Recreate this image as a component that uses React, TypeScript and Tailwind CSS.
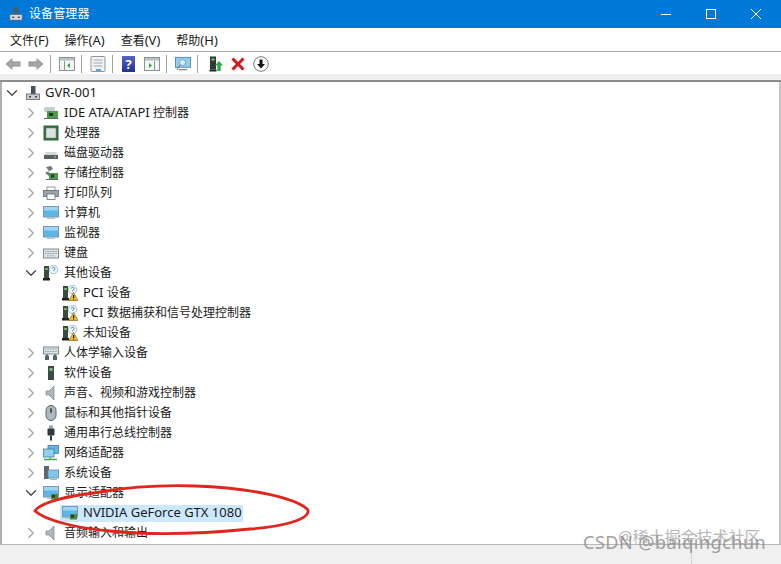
import { ChevronDown, ChevronRight } from "lucide-react";

const font = { fontFamily: '"Noto Sans", "Noto Sans CJK SC", sans-serif' };

// latin runs sit a bit wider than the cjk ones in the original
function Label({ text }: { text: string }) {
  const parts = text.split(/([\x20-\x7e]+)/).filter(Boolean);
  return (
    <>
      {parts.map((part, i) =>
        /^[\x20-\x7e]+$/.test(part) ? (
          <span key={i} className="text-[13px] whitespace-pre">
            {part}
          </span>
        ) : (
          <span key={i}>{part}</span>
        )
      )}
    </>
  );
}

function Box({ children }: { children: React.ReactNode }) {
  return (
    <svg viewBox="0 0 16 16" className="h-4 w-4 shrink-0">
      {children}
    </svg>
  );
}

const Warn = () => (
  <>
    <path d="M11.500 7.500L16 15.500H7z" fill="#f3bd2e" stroke="#8a6a10" strokeWidth="0.700" />
    <rect x="11" y="10" width="1.200" height="3" fill="#222" />
    <rect x="11" y="13.600" width="1.200" height="1.100" fill="#222" />
  </>
);

const Tower = () => (
  <>
    <rect x="1" y="1" width="5" height="12" fill="#3d4a3c" />
    <rect x="2" y="3" width="3" height="2" fill="#6fae6a" />
    <rect x="0" y="13" width="7" height="2.500" fill="#222" />
  </>
);

const Unknown = () => (
  <>
    <circle cx="10.500" cy="4.500" r="4.200" fill="#eef5fb" stroke="#8fb4d2" strokeWidth="0.800" />
    <path d="M9.200 3.600a1.400 1.400 0 1 1 1.900 1.400l-.5.4v.7" fill="none" stroke="#2f78b5" strokeWidth="0.900" />
  </>
);

const Monitor = ({ card }: { card?: boolean }) => (
  <>
    <rect x="0.500" y="1.500" width="15" height="10.500" fill="#5db6e8" stroke="#7c98ab" />
    <rect x="1" y="2" width="14" height="3.500" fill="#9bd6f5" />
    <rect x="4" y="12.500" width="8" height="1.500" fill="#b5c2cb" />
    {card && (
      <>
        <rect x="8" y="9" width="7" height="5.500" fill="#4c8a3f" />
        <rect x="9" y="10" width="3" height="2.500" fill="#1f3d1b" />
      </>
    )}
  </>
);

const icons: Record<string, React.ReactNode> = {
  root: (
    <>
      <rect x="6" y="1" width="4.500" height="8" fill="#46535d" />
      <rect x="1.500" y="9" width="13" height="5.500" fill="#c9ced2" stroke="#59646c" strokeWidth="0.800" />
      <rect x="4" y="11" width="2" height="1.500" fill="#444" />
      <rect x="10" y="11" width="2" height="1.500" fill="#444" />
    </>
  ),
  ide: (
    <>
      <rect x="1" y="2" width="11" height="5" rx="1" fill="#c7cfd3" />
      <rect x="4" y="6" width="11" height="7" fill="#4d9a4c" />
      <rect x="6" y="8" width="4" height="3" fill="#1e3c1d" />
      <rect x="1" y="13" width="14" height="1" fill="#5f6a70" />
    </>
  ),
  cpu: (
    <>
      <rect x="0.500" y="0.500" width="15" height="15" fill="#2f6b3c" />
      <rect x="3" y="3" width="10" height="10" fill="#dfe3df" stroke="#7b8f80" strokeWidth="0.600" />
    </>
  ),
  disk: (
    <>
      <path d="M3 7h10l2 3v4H1v-4z" fill="#d4d8da" />
      <rect x="1" y="10" width="14" height="4" fill="#5a5f63" />
      <rect x="11" y="11.500" width="2" height="1" fill="#9adf7a" />
    </>
  ),
  storage: (
    <>
      <path d="M3 2l5-1 2 3-5 3 4 2-3 2-4-3 4-2z" fill="#6d7a82" />
      <rect x="6" y="8" width="9" height="6" fill="#4d9a4c" />
      <rect x="8" y="9.500" width="3" height="3" fill="#1e3c1d" />
      <rect x="3" y="14" width="12" height="1" fill="#5f6a70" />
    </>
  ),
  printer: (
    <>
      <rect x="4" y="2" width="8" height="4" fill="#fff" stroke="#7a8790" strokeWidth="0.800" />
      <rect x="0.500" y="5.500" width="15" height="6" fill="#9aa5ac" stroke="#5e6a72" strokeWidth="0.800" />
      <rect x="4" y="9" width="8" height="5.500" fill="#fff" stroke="#5e6a72" strokeWidth="0.800" />
    </>
  ),
  monitor: <Monitor />,
  keyboard: (
    <>
      <rect x="0.500" y="4" width="15" height="9" fill="#dfe4e7" stroke="#7e8a92" />
      <path d="M2 6.500h12M2 8.500h12M4 10.800h8" stroke="#8e9aa2" strokeWidth="1" strokeDasharray="1 0.600" />
    </>
  ),
  other: (
    <>
      <Tower />
      <Unknown />
    </>
  ),
  warn: (
    <>
      <Tower />
      <Unknown />
      <Warn />
    </>
  ),
  hid: (
    <>
      <rect x="0.500" y="2" width="15" height="7" fill="#dfe4e7" stroke="#7e8a92" />
      <path d="M2 4h12M2 6.500h12" stroke="#8e9aa2" strokeDasharray="1 0.600" />
      <path d="M2 15v-4l2-2 2 2v4zM10 15v-4l2-2 2 2v4z" fill="#56646d" />
    </>
  ),
  software: (
    <>
      <rect x="5" y="1" width="6" height="14" fill="#3e4a46" />
      <rect x="6.500" y="3" width="3" height="3" fill="#6cc46c" />
    </>
  ),
  sound: <path d="M3 6h3l5-5v14l-5-5H3z" fill="#aeb7bc" stroke="#7c878e" strokeWidth="0.700" />,
  mouse: (
    <>
      <rect x="3" y="0.500" width="10" height="15" rx="5" fill="#aeb8be" stroke="#58646c" />
      <rect x="7" y="3" width="2" height="5" rx="1" fill="#48545c" />
    </>
  ),
  usb: (
    <>
      <rect x="6" y="0.500" width="4" height="3" fill="#9aa3a8" />
      <rect x="4.500" y="3.500" width="7" height="7" rx="1" fill="#30383d" />
      <rect x="7" y="10.500" width="2" height="5" fill="#30383d" />
    </>
  ),
  network: (
    <>
      <rect x="5" y="0.500" width="10.500" height="8" fill="#5db6e8" stroke="#4a7a9c" strokeWidth="0.800" />
      <rect x="0.500" y="4" width="10.500" height="8" fill="#8fd0f2" stroke="#4a7a9c" strokeWidth="0.800" />
      <path d="M1 14.500h13M7 12v2.500" stroke="#45a845" strokeWidth="1.300" />
    </>
  ),
  system: (
    <>
      <rect x="1" y="1" width="5" height="13" fill="#59666e" />
      <rect x="5" y="5" width="10.500" height="8" fill="#7cc6ee" stroke="#6c8798" strokeWidth="0.800" />
      <rect x="7" y="13.500" width="7" height="1.500" fill="#aab6bd" />
    </>
  ),
  display: <Monitor card />,
};

type Row = { name: string; icon: string; state: "closed" | "open" | "leaf"; selected?: boolean };

const rows: Row[] = [
  { name: "IDE ATA/ATAPI 控制器", icon: "ide", state: "closed" },
  { name: "处理器", icon: "cpu", state: "closed" },
  { name: "磁盘驱动器", icon: "disk", state: "closed" },
  { name: "存储控制器", icon: "storage", state: "closed" },
  { name: "打印队列", icon: "printer", state: "closed" },
  { name: "计算机", icon: "monitor", state: "closed" },
  { name: "监视器", icon: "monitor", state: "closed" },
  { name: "键盘", icon: "keyboard", state: "closed" },
  { name: "其他设备", icon: "other", state: "open" },
  { name: "PCI 设备", icon: "warn", state: "leaf" },
  { name: "PCI 数据捕获和信号处理控制器", icon: "warn", state: "leaf" },
  { name: "未知设备", icon: "warn", state: "leaf" },
  { name: "人体学输入设备", icon: "hid", state: "closed" },
  { name: "软件设备", icon: "software", state: "closed" },
  { name: "声音、视频和游戏控制器", icon: "sound", state: "closed" },
  { name: "鼠标和其他指针设备", icon: "mouse", state: "closed" },
  { name: "通用串行总线控制器", icon: "usb", state: "closed" },
  { name: "网络适配器", icon: "network", state: "closed" },
  { name: "系统设备", icon: "system", state: "closed" },
  { name: "显示适配器", icon: "display", state: "open" },
  { name: "NVIDIA GeForce GTX 1080", icon: "display", state: "leaf", selected: true },
  { name: "音频输入和输出", icon: "sound", state: "closed" },
];

function Arrow({ open }: { open: boolean }) {
  return (
    <span className="flex w-[18px] justify-center">
      {open ? (
        <ChevronDown className="h-5 w-5 text-[#444]" strokeWidth={1.7} />
      ) : (
        <ChevronRight className="h-5 w-5 text-[#a6a6a6]" strokeWidth={1.7} />
      )}
    </span>
  );
}

function TreeRow({ row }: { row: Row }) {
  if (row.state === "leaf") {
    return (
      <div className="flex h-5 items-center pl-[58px]">
        <div className={`flex h-[17px] items-center pl-[2px] ${row.selected ? "bg-[#cce8ff]" : ""}`}>
          <Box>{icons[row.icon]}</Box>
          <span className="pl-[5px] pr-[1px] whitespace-nowrap">
            <Label text={row.name} />
          </span>
        </div>
      </div>
    );
  }
  return (
    <div className="flex h-5 items-center pl-[20px]">
      <Arrow open={row.state === "open"} />
      <span className="pl-[3px]">
        <Box>{icons[row.icon]}</Box>
      </span>
      <span className="pl-[5px] whitespace-nowrap">
        <Label text={row.name} />
      </span>
    </div>
  );
}

const Sep = () => <div className="mr-[8px] ml-[6px] h-[18px] w-px bg-[#a0a0a0]" />;

function Toolbar() {
  return (
    <div className="flex h-[22px] items-center bg-white pt-[2px] pl-[5px]">
      <svg viewBox="0 0 18 16" className="h-4 w-4">
        <path d="M1 8l7-6v3.500h9v5H8V14z" fill="#a3a7a9" stroke="#7f8487" strokeWidth="0.700" />
      </svg>
      <svg viewBox="0 0 18 16" className="ml-[7px] h-4 w-4">
        <path d="M17 8l-7-6v3.500H1v5h9V14z" fill="#a3a7a9" stroke="#7f8487" strokeWidth="0.700" />
      </svg>
      <Sep />
      <svg viewBox="0 0 16 14" className="h-[14px] w-4">
        <rect x="0.500" y="0.500" width="15" height="13" fill="#f2f4f5" stroke="#8a9398" />
        <rect x="1" y="1" width="14" height="2.500" fill="#b8c0c5" />
        <path d="M11 6v5L8 8.500z" fill="#3ea03e" />
        <path d="M5.500 4v9" stroke="#8a9398" />
      </svg>
      <Sep />
      <svg viewBox="0 0 16 16" className="h-4 w-4">
        <rect x="1" y="0.500" width="14" height="15" rx="1" fill="#f1f2f3" stroke="#8f979c" />
        <path d="M3.500 4h9M3.500 7h9M3.500 10h9" stroke="#a3abb0" />
        <rect x="6" y="13" width="5" height="2" fill="#58a8e0" />
      </svg>
      <Sep />
      <div className="ml-[1px] flex h-4 w-[13px] items-center justify-center bg-gradient-to-b from-[#5667c9] to-[#24328f] text-[13px] leading-none font-bold text-white">
        ?
      </div>
      <svg viewBox="0 0 16 14" className="ml-[9px] h-[14px] w-4">
        <rect x="0.500" y="0.500" width="15" height="13" fill="#f2f4f5" stroke="#8a9398" />
        <rect x="1" y="1" width="14" height="2.500" fill="#b8c0c5" />
        <path d="M5 6v5l3-2.500z" fill="#3ea03e" />
        <path d="M10.500 4v9" stroke="#8a9398" />
      </svg>
      <Sep />
      <svg viewBox="0 0 17 16" className="h-4 w-4">
        <rect x="0.500" y="1" width="16" height="10.500" fill="#8fd0f2" stroke="#5b8aa8" />
        <circle cx="8" cy="6.500" r="3.200" fill="#d7eefb" stroke="#7d9db3" />
        <path d="M5.500 9l-3.500 5M4 14h9" stroke="#7d8a92" strokeWidth="1.200" />
      </svg>
      <Sep />
      <svg viewBox="0 0 14 16" className="ml-[3px] h-4 w-[14px]">
        <rect x="1" y="0.500" width="6" height="13" fill="#2f3a36" />
        <rect x="2.500" y="2.500" width="3" height="2" fill="#7fc77f" />
        <rect x="0.500" y="13.500" width="7" height="2" fill="#222" />
        <path d="M10 5l4 4.500h-2.300V15H8.300V9.500H6z" fill="#2ea84a" />
      </svg>
      <svg viewBox="0 0 14 14" className="ml-[8px] h-[14px] w-[14px]">
        <path d="M1.500 1.500l11 11M12.500 1.500l-11 11" stroke="#d0181f" strokeWidth="3" />
      </svg>
      <svg viewBox="0 0 16 16" className="ml-[8px] h-4 w-4">
        <circle cx="8" cy="8" r="7.300" fill="#fff" stroke="#777" />
        <path d="M6.500 3.500h3V8H12l-4 4.500L4 8h2.500z" fill="#111" />
      </svg>
    </div>
  );
}

function TitleBar() {
  return (
    <div className="flex h-[28px] items-center bg-[#0078d7] pl-[9px] text-white">
      <svg viewBox="0 0 16 16" className="h-[14px] w-[14px]">
        <rect x="5.500" y="0.500" width="5" height="8" fill="#4a5964" />
        <rect x="1" y="8.500" width="14" height="6.500" fill="#d6dade" stroke="#59646c" strokeWidth="0.800" />
        <rect x="3.500" y="11" width="2.500" height="1.500" fill="#444" />
        <rect x="10" y="11" width="2.500" height="1.500" fill="#444" />
      </svg>
      <span className="ml-[6px] text-[12px] tracking-[0.1px]">设备管理器</span>
      <div className="ml-auto flex items-center pr-[20px]">
        <div className="mr-[35px] h-px w-[10px] bg-white" />
        <div className="mr-[35px] h-[10px] w-[10px] border border-white" />
        <svg viewBox="0 0 10 10" className="h-[10px] w-[10px]">
          <path d="M0 0l10 10M10 0L0 10" stroke="#fff" strokeWidth="1" />
        </svg>
      </div>
    </div>
  );
}

export default function App() {
  return (
    <div className="relative h-[564px] w-[781px] overflow-hidden bg-white text-[12px] text-[#1a1a1a]" style={font}>
      <TitleBar />
      <div className="flex h-[24px] items-center gap-[16px] border-b border-[#a8a8a8] pt-[2px] pl-[10px]">
        {["文件(F)", "操作(A)", "查看(V)", "帮助(H)"].map((m) => (
          <span key={m}>
            <Label text={m} />
          </span>
        ))}
      </div>
      <Toolbar />
      <div className="h-[8px] border-b-2 border-[#8c8c8c] bg-[#f0f0f0]" />
      <div className="h-[462px] overflow-hidden border-x-2 border-x-[#b0b0b0] border-r-[#c4c4c4] pt-[1px]">
        <div className="flex h-5 items-center pl-[1px]">
          <Arrow open />
          <span className="pl-[4px]">
            <Box>{icons.root}</Box>
          </span>
          <span className="pl-[4px]">
            <Label text="GVR-001" />
          </span>
        </div>
        {rows.map((row) => (
          <TreeRow key={row.name} row={row} />
        ))}
      </div>
      <div className="flex h-[20px] border-t border-[#b8b8b8] bg-[#f0f0f0]">
        <div className="ml-auto w-[90px] border-l border-[#d4d4d4]" />
      </div>

      {/* hand-drawn highlight */}
      <svg viewBox="0 0 781 564" className="pointer-events-none absolute inset-0 h-[564px] w-[781px]">
        <path
          d="M35 511C40 503 60 497 100 492C130 487 165 485 195 486C255 488 298 499 308 510C310 520 280 527 250 529C200 534 150 535 110 531C75 528 45 520 35 511Z"
          fill="none"
          stroke="#e0261c"
          strokeWidth="2.800"
        />
      </svg>

      {/* watermarks */}
      <span className="absolute top-[525px] left-[618px] text-[16px] text-[#a8a8a8] opacity-80">@稀土掘金技术社区</span>
      <span className="absolute top-[529px] left-[583px] text-[18px] tracking-[0.5px] text-[#8a8a8a] opacity-80">CSDN @baiqingchun</span>
    </div>
  );
}
